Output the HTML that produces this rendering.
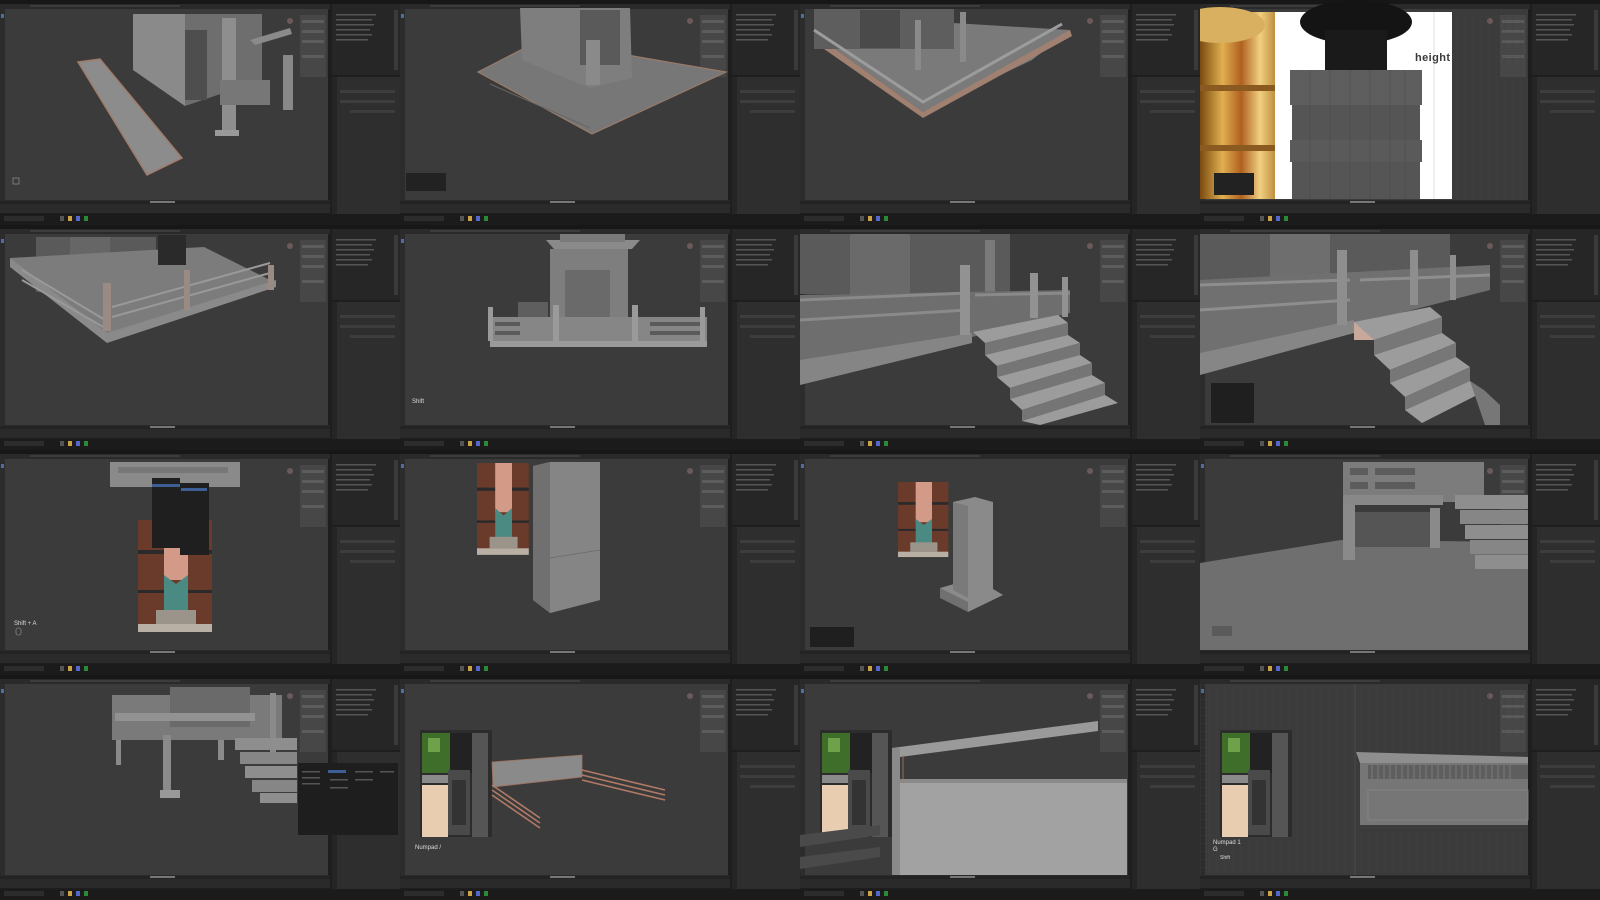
<!DOCTYPE html>
<html><head><meta charset="utf-8"><style>
html,body{margin:0;padding:0;background:#1a1a1a;width:1600px;height:900px;overflow:hidden}
svg{position:absolute;display:block}
text{font-family:"Liberation Sans",sans-serif}
</style></head><body>
<svg width="0" height="0" style="position:absolute">
<defs>
<pattern id="grid" width="8" height="8" patternUnits="userSpaceOnUse"><path d="M8 0H0V8" fill="none" stroke="#444" stroke-width="0.5"/></pattern>
<linearGradient id="gold" x1="0" x2="1"><stop offset="0" stop-color="#7a4a10"/><stop offset="0.3" stop-color="#e0b050"/><stop offset="0.55" stop-color="#b06020"/><stop offset="0.8" stop-color="#f0d080"/><stop offset="1" stop-color="#c09040"/></linearGradient>
<g id="chrome">
<rect x="0" y="0" width="400" height="225" fill="#1e1e1e"/>
<rect x="0" y="0" width="400" height="4" fill="#171717"/>
<rect x="0" y="4" width="330" height="5" fill="#2a2a2a"/>
<rect x="30" y="5" width="150" height="2" fill="#4a4a4a" opacity="0.6"/>
<rect x="0" y="9" width="328" height="191" fill="#3b3b3b"/>
<rect x="0" y="9" width="5" height="191" fill="#2c2c2c"/>
<rect x="1" y="14" width="3" height="4" fill="#4a6fa8"/>
<rect x="300" y="15" width="26" height="62" fill="#4a4a4a" opacity="0.85"/>
<rect x="302" y="20" width="22" height="3" fill="#5c5c5c"/><rect x="302" y="30" width="22" height="3" fill="#5c5c5c"/><rect x="302" y="40" width="22" height="3" fill="#5c5c5c"/><rect x="302" y="55" width="22" height="3" fill="#5c5c5c"/>
<rect x="287" y="18" width="6" height="6" rx="3" fill="#6a5a5a"/>
<rect x="332" y="4" width="68" height="71" fill="#262626"/>
<rect x="336" y="14" width="40" height="1.5" fill="#555"/><rect x="336" y="19" width="36" height="1.5" fill="#555"/><rect x="336" y="24" width="38" height="1.5" fill="#555"/><rect x="336" y="29" width="34" height="1.5" fill="#555"/><rect x="336" y="34" width="36" height="1.5" fill="#555"/><rect x="336" y="39" width="32" height="1.5" fill="#555"/>
<rect x="394" y="10" width="4" height="60" fill="#3a3a3a"/>
<rect x="332" y="77" width="68" height="138" fill="#2e2e2e"/>
<rect x="332" y="77" width="5" height="138" fill="#252525"/>
<rect x="340" y="90" width="55" height="3" fill="#3d3d3d"/><rect x="340" y="100" width="55" height="3" fill="#3d3d3d"/><rect x="350" y="110" width="45" height="3" fill="#3d3d3d"/>
<rect x="0" y="200" width="330" height="13" fill="#2a2a2a"/>
<rect x="0" y="201" width="330" height="3" fill="#232323"/>
<rect x="150" y="201" width="25" height="2" fill="#777"/>
<rect x="0" y="214" width="400" height="11" fill="#1b1b1b"/>
<rect x="4" y="216" width="40" height="5" fill="#2c2c2c"/>
<rect x="60" y="216" width="4" height="5" fill="#555"/><rect x="68" y="216" width="4" height="5" fill="#c9a24a"/><rect x="76" y="216" width="4" height="5" fill="#5566cc"/><rect x="84" y="216" width="4" height="5" fill="#2a8a3a"/>
</g>
<g id="photo">
<rect x="0" y="0" width="72" height="107" fill="#2c2c2c"/>
<rect x="2" y="3" width="28" height="40" fill="#3f6e2a"/>
<rect x="8" y="8" width="12" height="14" fill="#6fa04a"/>
<rect x="30" y="3" width="22" height="40" fill="#222"/>
<rect x="2" y="45" width="28" height="8" fill="#8a8a8a"/>
<rect x="2" y="55" width="26" height="52" fill="#e8cdb0"/>
<rect x="28" y="40" width="22" height="65" fill="#4a4a4a"/>
<rect x="32" y="50" width="14" height="45" fill="#333"/>
<rect x="52" y="3" width="16" height="104" fill="#555"/>
</g>
<g id="pillarphoto">
<rect x="0" y="0" width="74" height="112" fill="#6a3a2a"/>
<rect x="0" y="30" width="74" height="4" fill="#2a2a2a"/>
<rect x="0" y="70" width="74" height="3" fill="#2a2a2a"/>
<rect x="26" y="0" width="24" height="60" fill="#d49a88"/>
<polygon points="26,55 38,64 50,55 50,92 26,92" fill="#4a8a82"/>
<rect x="18" y="90" width="40" height="14" fill="#9a948a"/>
<rect x="0" y="104" width="74" height="8" fill="#b8b0a4"/>
</g>
</defs>
</svg>

<!-- Row 1 -->
<svg x="0" y="0" width="400" height="225" style="left:0;top:0" viewBox="0 0 400 225">
<use href="#chrome"/>
<polygon points="133,14 185,14 185,106 133,70" fill="#8a8a8a"/>
<polygon points="185,14 262,14 262,80 185,106" fill="#6e6e6e"/>
<rect x="185" y="30" width="22" height="70" fill="#4e4e4e"/>
<rect x="222" y="18" width="14" height="118" fill="#8e8e8e"/>
<rect x="215" y="130" width="24" height="6" fill="#999"/>
<rect x="220" y="80" width="50" height="25" fill="#777"/>
<polygon points="250,40 290,28 292,34 255,45" fill="#8a8a8a"/>
<rect x="283" y="55" width="10" height="55" fill="#888"/>
<polygon points="78,62 100,59 182,158 147,175" fill="#8c8c8c" stroke="#a07a6a" stroke-width="1.5"/>
<rect x="13" y="178" width="6" height="6" fill="none" stroke="#888" stroke-width="0.8"/>
</svg>

<svg style="left:400px;top:0" width="400" height="225" viewBox="0 0 400 225">
<use href="#chrome"/>
<polygon points="78,72 140,40 326,72 192,134" fill="#777" stroke="#9a7a6a" stroke-width="1.2"/>
<polygon points="120,8 230,8 232,78 190,88 122,60" fill="#7e7e7e"/>
<rect x="180" y="10" width="40" height="55" fill="#5a5a5a"/>
<rect x="186" y="40" width="14" height="45" fill="#8a8a8a"/>
<line x1="90" y1="84" x2="190" y2="128" stroke="#666" stroke-width="1"/>
<rect x="6" y="173" width="40" height="18" fill="#222"/>
</svg>

<svg style="left:800px;top:0" width="400" height="225" viewBox="0 0 400 225">
<use href="#chrome"/>
<polygon points="14,34 70,18 270,30 232,60 123,112" fill="#7a7a7a"/>
<polygon points="14,34 123,112 123,118 14,42" fill="#a08070"/>
<polygon points="123,112 270,30 272,36 123,118" fill="#a08070"/>
<rect x="14" y="9" width="140" height="40" fill="#5e5e5e"/>
<rect x="60" y="10" width="40" height="38" fill="#4a4a4a"/>
<polyline points="14,30 123,102 262,24" fill="none" stroke="#9c9c9c" stroke-width="3"/>
<rect x="115" y="20" width="6" height="50" fill="#8a8a8a"/><rect x="160" y="12" width="6" height="50" fill="#8a8a8a"/>
</svg>

<svg style="left:1200px;top:0" width="400" height="225" viewBox="0 0 400 225">
<use href="#chrome"/>
<rect x="0" y="9" width="328" height="191" fill="url(#grid)"/>
<rect x="0" y="12" width="252" height="187" fill="#fff"/>
<rect x="0" y="12" width="75" height="187" fill="url(#gold)"/>
<ellipse cx="20" cy="25" rx="45" ry="18" fill="#d8b060"/>
<rect x="0" y="85" width="75" height="6" fill="#8a5a20"/><rect x="0" y="145" width="75" height="6" fill="#8a5a20"/>
<ellipse cx="156" cy="22" rx="56" ry="22" fill="#141414"/>
<rect x="125" y="30" width="62" height="40" fill="#1a1a1a"/>
<rect x="92" y="70" width="128" height="129" fill="#555"/>
<rect x="90" y="70" width="132" height="35" fill="#5e5e5e"/>
<rect x="90" y="140" width="132" height="22" fill="#5a5a5a"/>
<g stroke="#4a4a4a" stroke-width="0.6"><line x1="110" y1="70" x2="110" y2="199"/><line x1="130" y1="70" x2="130" y2="199"/><line x1="150" y1="70" x2="150" y2="199"/><line x1="170" y1="70" x2="170" y2="199"/><line x1="190" y1="70" x2="190" y2="199"/><line x1="205" y1="70" x2="205" y2="199"/></g>
<line x1="234" y1="12" x2="234" y2="199" stroke="#ccc" stroke-width="0.6"/>
<text x="215" y="61" font-size="11" fill="#3a3a3a" font-weight="bold" textLength="35">height</text>
<rect x="14" y="173" width="40" height="22" fill="#222"/>
</svg>

<!-- Row 2 -->
<svg style="left:0;top:225px" width="400" height="225" viewBox="0 0 400 225">
<use href="#chrome"/>
<rect x="36" y="12" width="120" height="55" fill="#5a5a5a"/>
<rect x="70" y="12" width="40" height="55" fill="#666"/>
<polygon points="10,33 204,22 276,58 107,115" fill="#7c7c7c"/>
<polygon points="10,33 107,108 107,118 10,42" fill="#8a8a8a"/>
<polygon points="107,108 276,55 276,62 107,118" fill="#8a8a8a"/>
<g stroke="#999" stroke-width="2"><line x1="22" y1="45" x2="105" y2="95"/><line x1="22" y1="55" x2="105" y2="103"/><line x1="112" y1="82" x2="270" y2="38"/><line x1="112" y1="92" x2="270" y2="48"/></g>
<rect x="103" y="58" width="8" height="48" fill="#9a8a84"/><rect x="184" y="45" width="6" height="40" fill="#9a8a84"/><rect x="268" y="40" width="6" height="25" fill="#9a8a84"/>
<rect x="158" y="10" width="28" height="30" fill="#2a2a2a"/>
</svg>

<svg style="left:400px;top:225px" width="400" height="225" viewBox="0 0 400 225">
<use href="#chrome"/>
<rect x="118" y="77" width="30" height="36" fill="#5e5e5e"/>
<polygon points="146,15 240,15 232,24 154,24" fill="#8a8a8a"/>
<rect x="160" y="9" width="65" height="8" fill="#7a7a7a"/>
<rect x="150" y="24" width="78" height="92" fill="#7e7e7e"/>
<rect x="165" y="45" width="45" height="65" fill="#6a6a6a"/>
<rect x="90" y="92" width="217" height="24" fill="#868686"/>
<rect x="90" y="116" width="217" height="6" fill="#9a9a9a"/>
<g fill="#5a5a5a"><rect x="95" y="97" width="25" height="4"/><rect x="95" y="106" width="25" height="4"/><rect x="250" y="97" width="50" height="4"/><rect x="250" y="106" width="50" height="4"/></g>
<g fill="#9a9a9a"><rect x="88" y="82" width="5" height="34"/><rect x="153" y="80" width="6" height="36"/><rect x="232" y="80" width="6" height="36"/><rect x="300" y="82" width="5" height="34"/></g>
<text x="12" y="178" font-size="6" fill="#ddd">Shift</text>
</svg>

<svg style="left:800px;top:225px" width="400" height="225" viewBox="0 0 400 225">
<use href="#chrome"/>
<rect x="0" y="9" width="210" height="60" fill="#5a5a5a"/>
<rect x="50" y="9" width="60" height="70" fill="#6a6a6a"/>
<rect x="185" y="15" width="10" height="75" fill="#7a7a7a"/>
<polygon points="0,70 270,65 270,88 172,112 0,150" fill="#6e6e6e"/>
<polygon points="0,135 172,108 172,118 0,160" fill="#858585"/>
<g stroke="#8a8a8a" stroke-width="3"><line x1="0" y1="75" x2="168" y2="68"/><line x1="0" y1="95" x2="168" y2="85"/><line x1="175" y1="70" x2="270" y2="68"/></g>
<rect x="160" y="40" width="10" height="70" fill="#929292"/><rect x="230" y="48" width="8" height="45" fill="#929292"/><rect x="262" y="52" width="6" height="40" fill="#929292"/>
<g>
<polygon points="173,107 258,90 268,98 185,118" fill="#9c9c9c"/><polygon points="185,118 268,98 268,110 185,130" fill="#757575"/>
<polygon points="185,130 268,110 280,118 197,141" fill="#9c9c9c"/><polygon points="197,141 280,118 280,130 197,152" fill="#757575"/>
<polygon points="197,152 280,130 292,138 210,163" fill="#9c9c9c"/><polygon points="210,163 292,138 292,150 210,174" fill="#757575"/>
<polygon points="210,174 292,150 305,158 222,185" fill="#9c9c9c"/><polygon points="222,185 305,158 305,170 222,196" fill="#757575"/>
<polygon points="222,196 305,170 318,178 240,200" fill="#9c9c9c"/>
</g>
</svg>

<svg style="left:1200px;top:225px" width="400" height="225" viewBox="0 0 400 225">
<use href="#chrome"/>
<rect x="0" y="9" width="250" height="50" fill="#5a5a5a"/>
<rect x="70" y="9" width="60" height="60" fill="#6e6e6e"/>
<polygon points="0,55 290,40 290,65 154,100 0,140" fill="#707070"/>
<polygon points="0,128 154,95 154,108 0,150" fill="#868686"/>
<g stroke="#8e8e8e" stroke-width="3"><line x1="0" y1="60" x2="150" y2="55"/><line x1="0" y1="85" x2="150" y2="75"/><line x1="160" y1="55" x2="290" y2="50"/></g>
<rect x="137" y="25" width="10" height="75" fill="#8e8e8e"/><rect x="210" y="25" width="8" height="55" fill="#8e8e8e"/><rect x="250" y="30" width="6" height="45" fill="#8e8e8e"/>
<rect x="154" y="97" width="20" height="18" fill="#c8a89a"/>
<g>
<polygon points="154,97 230,82 242,92 174,115" fill="#9c9c9c"/><polygon points="174,115 242,92 242,108 174,130" fill="#777"/>
<polygon points="174,130 242,108 256,118 190,145" fill="#9c9c9c"/><polygon points="190,145 256,118 256,132 190,158" fill="#777"/>
<polygon points="190,158 256,132 270,142 205,172" fill="#9c9c9c"/><polygon points="205,172 270,142 270,156 205,185" fill="#777"/>
<polygon points="205,185 270,156 285,166 222,198" fill="#9c9c9c"/><polygon points="270,156 285,166 300,180 300,200 285,200" fill="#777"/>
</g>
<rect x="11" y="158" width="43" height="40" fill="#1f1f1f"/>
</svg>

<!-- Row 3 -->
<svg style="left:0;top:450px" width="400" height="225" viewBox="0 0 400 225">
<use href="#chrome"/>
<rect x="110" y="12" width="130" height="25" fill="#8a8a8a"/>
<rect x="118" y="17" width="110" height="6" fill="#777"/>
<use href="#pillarphoto" transform="translate(138,70)"/>
<rect x="152" y="28" width="28" height="70" fill="#1f1f1f"/>
<rect x="180" y="33" width="29" height="72" fill="#1f1f1f"/>
<rect x="152" y="34" width="28" height="3" fill="#3d5f95"/>
<rect x="181" y="38" width="26" height="3" fill="#3d5f95"/>
<text x="14" y="175" font-size="6" fill="#ddd">Shift + A</text>
<rect x="16" y="178" width="5" height="7" rx="2" fill="none" stroke="#999" stroke-width="0.6"/>
</svg>

<svg style="left:400px;top:450px" width="400" height="225" viewBox="0 0 400 225">
<use href="#chrome"/>
<g transform="translate(77,13) scale(0.7,0.82)"><use href="#pillarphoto"/></g>
<polygon points="133,16 150,12 200,12 200,150 150,163 133,150" fill="#7e7e7e"/>
<polygon points="133,16 150,12 150,163 133,150" fill="#707070"/>
<polygon points="150,12 200,12 200,150 150,163" fill="#858585"/>
<line x1="150" y1="108" x2="200" y2="100" stroke="#6a6a6a" stroke-width="0.8"/>
</svg>

<svg style="left:800px;top:450px" width="400" height="225" viewBox="0 0 400 225">
<use href="#chrome"/>
<g transform="translate(98,32) scale(0.68,0.67)"><use href="#pillarphoto"/></g>
<polygon points="140,138 175,128 203,145 168,162" fill="#8a8a8a"/>
<polygon points="140,138 168,152 168,162 140,148" fill="#707070"/>
<polygon points="153,52 175,47 193,52 193,143 168,148 153,140" fill="#8a8a8a"/>
<polygon points="153,52 168,56 168,148 153,140" fill="#7a7a7a"/>
<rect x="10" y="177" width="44" height="20" fill="#1f1f1f"/>
</svg>

<svg style="left:1200px;top:450px" width="400" height="225" viewBox="0 0 400 225">
<use href="#chrome"/>
<polygon points="0,113 141,90 328,92 328,200 0,200" fill="#6f6f6f"/>
<rect x="143" y="12" width="141" height="40" fill="#7c7c7c"/>
<g fill="#5c5c5c"><rect x="150" y="18" width="18" height="7"/><rect x="175" y="18" width="40" height="7"/><rect x="150" y="32" width="18" height="7"/><rect x="175" y="32" width="40" height="7"/></g>
<rect x="143" y="45" width="100" height="10" fill="#888"/>
<rect x="143" y="55" width="12" height="55" fill="#8a8a8a"/><rect x="230" y="58" width="10" height="40" fill="#8a8a8a"/>
<rect x="155" y="62" width="75" height="35" fill="#555"/>
<g><rect x="255" y="45" width="73" height="14" fill="#8e8e8e"/><rect x="260" y="60" width="68" height="14" fill="#868686"/><rect x="265" y="75" width="63" height="14" fill="#8e8e8e"/><rect x="270" y="90" width="58" height="14" fill="#868686"/><rect x="275" y="105" width="53" height="14" fill="#8e8e8e"/></g>
<rect x="12" y="176" width="20" height="10" fill="#5a5a5a"/>
</svg>

<!-- Row 4 -->
<svg style="left:0;top:675px" width="400" height="225" viewBox="0 0 400 225">
<use href="#chrome"/>
<rect x="112" y="20" width="170" height="45" fill="#7a7a7a"/>
<rect x="170" y="12" width="80" height="40" fill="#6a6a6a"/>
<rect x="115" y="38" width="140" height="8" fill="#929292"/>
<g fill="#8a8a8a"><rect x="116" y="65" width="5" height="25"/><rect x="163" y="60" width="8" height="62"/><rect x="218" y="65" width="6" height="20"/><rect x="270" y="18" width="6" height="60"/></g>
<rect x="160" y="115" width="20" height="8" fill="#999"/>
<g><rect x="235" y="63" width="62" height="12" fill="#8e8e8e"/><rect x="240" y="77" width="57" height="12" fill="#868686"/><rect x="245" y="91" width="52" height="12" fill="#8e8e8e"/><rect x="252" y="105" width="45" height="12" fill="#868686"/><rect x="260" y="118" width="37" height="10" fill="#8e8e8e"/></g>
<rect x="298" y="88" width="100" height="72" fill="#1e1e1e"/>
<rect x="328" y="95" width="18" height="3" fill="#3d5f95"/>
<g fill="#555"><rect x="302" y="96" width="18" height="1.5"/><rect x="302" y="102" width="18" height="1.5"/><rect x="302" y="108" width="18" height="1.5"/><rect x="330" y="104" width="18" height="1.5"/><rect x="330" y="112" width="18" height="1.5"/><rect x="355" y="96" width="18" height="1.5"/><rect x="355" y="104" width="18" height="1.5"/><rect x="380" y="96" width="14" height="1.5"/></g>
</svg>

<svg style="left:400px;top:675px" width="400" height="225" viewBox="0 0 400 225">
<use href="#chrome"/>
<use href="#photo" transform="translate(20,55) scale(1,1)"/>
<polygon points="92,87 182,80 182,102 93,112" fill="#8a8a8a" stroke="#a0705a" stroke-width="0.8"/>
<g stroke="#b07a66" stroke-width="1.6"><line x1="92" y1="110" x2="140" y2="143"/><line x1="92" y1="115" x2="140" y2="148"/><line x1="92" y1="120" x2="140" y2="153"/><line x1="182" y1="95" x2="265" y2="115"/><line x1="182" y1="100" x2="265" y2="120"/><line x1="182" y1="105" x2="265" y2="125"/></g>
<text x="15" y="174" font-size="6" fill="#ddd">Numpad /</text>
</svg>

<svg style="left:800px;top:675px" width="400" height="225" viewBox="0 0 400 225">
<use href="#chrome"/>
<use href="#photo" transform="translate(20,55)"/>
<rect x="92" y="107" width="235" height="93" fill="#a2a2a2"/>
<rect x="92" y="104" width="235" height="4" fill="#8a8a8a"/>
<polygon points="92,73 298,46 298,56 100,82" fill="#9a9a9a"/>
<rect x="92" y="73" width="8" height="127" fill="#8a8a8a"/>
<line x1="103" y1="80" x2="103" y2="108" stroke="#b07a66" stroke-width="0.8"/>
<g fill="#4a4a4a"><polygon points="0,160 80,150 80,160 0,172"/><polygon points="0,182 80,172 80,182 0,194"/></g>
</svg>

<svg style="left:1200px;top:675px" width="400" height="225" viewBox="0 0 400 225">
<use href="#chrome"/>
<rect x="0" y="9" width="328" height="191" fill="url(#grid)"/>
<line x1="155" y1="9" x2="155" y2="200" stroke="#555" stroke-width="0.6"/>
<use href="#photo" transform="translate(20,55)"/>
<polygon points="156,77 328,82 328,90 160,88" fill="#8e8e8e"/>
<rect x="160" y="88" width="168" height="62" fill="#767676"/>
<rect x="168" y="90" width="160" height="14" fill="#5e5e5e"/>
<g stroke="#888" stroke-width="0.7"><line x1="172" y1="90" x2="172" y2="104"/><line x1="178" y1="90" x2="178" y2="104"/><line x1="184" y1="90" x2="184" y2="104"/><line x1="190" y1="90" x2="190" y2="104"/><line x1="196" y1="90" x2="196" y2="104"/><line x1="202" y1="90" x2="202" y2="104"/><line x1="208" y1="90" x2="208" y2="104"/><line x1="214" y1="90" x2="214" y2="104"/><line x1="220" y1="90" x2="220" y2="104"/><line x1="226" y1="90" x2="226" y2="104"/><line x1="232" y1="90" x2="232" y2="104"/><line x1="238" y1="90" x2="238" y2="104"/><line x1="244" y1="90" x2="244" y2="104"/><line x1="250" y1="90" x2="250" y2="104"/><line x1="256" y1="90" x2="256" y2="104"/><line x1="262" y1="90" x2="262" y2="104"/><line x1="268" y1="90" x2="268" y2="104"/><line x1="274" y1="90" x2="274" y2="104"/><line x1="280" y1="90" x2="280" y2="104"/><line x1="286" y1="90" x2="286" y2="104"/><line x1="292" y1="90" x2="292" y2="104"/><line x1="298" y1="90" x2="298" y2="104"/><line x1="304" y1="90" x2="304" y2="104"/><line x1="310" y1="90" x2="310" y2="104"/></g>
<rect x="168" y="115" width="160" height="30" fill="none" stroke="#888" stroke-width="0.8"/>
<text x="13" y="169" font-size="6" fill="#ddd">Numpad 1</text>
<text x="13" y="176" font-size="6" fill="#ddd">G</text>
<text x="20" y="184" font-size="5" fill="#ddd">Shift</text>
</svg>
</body></html>
